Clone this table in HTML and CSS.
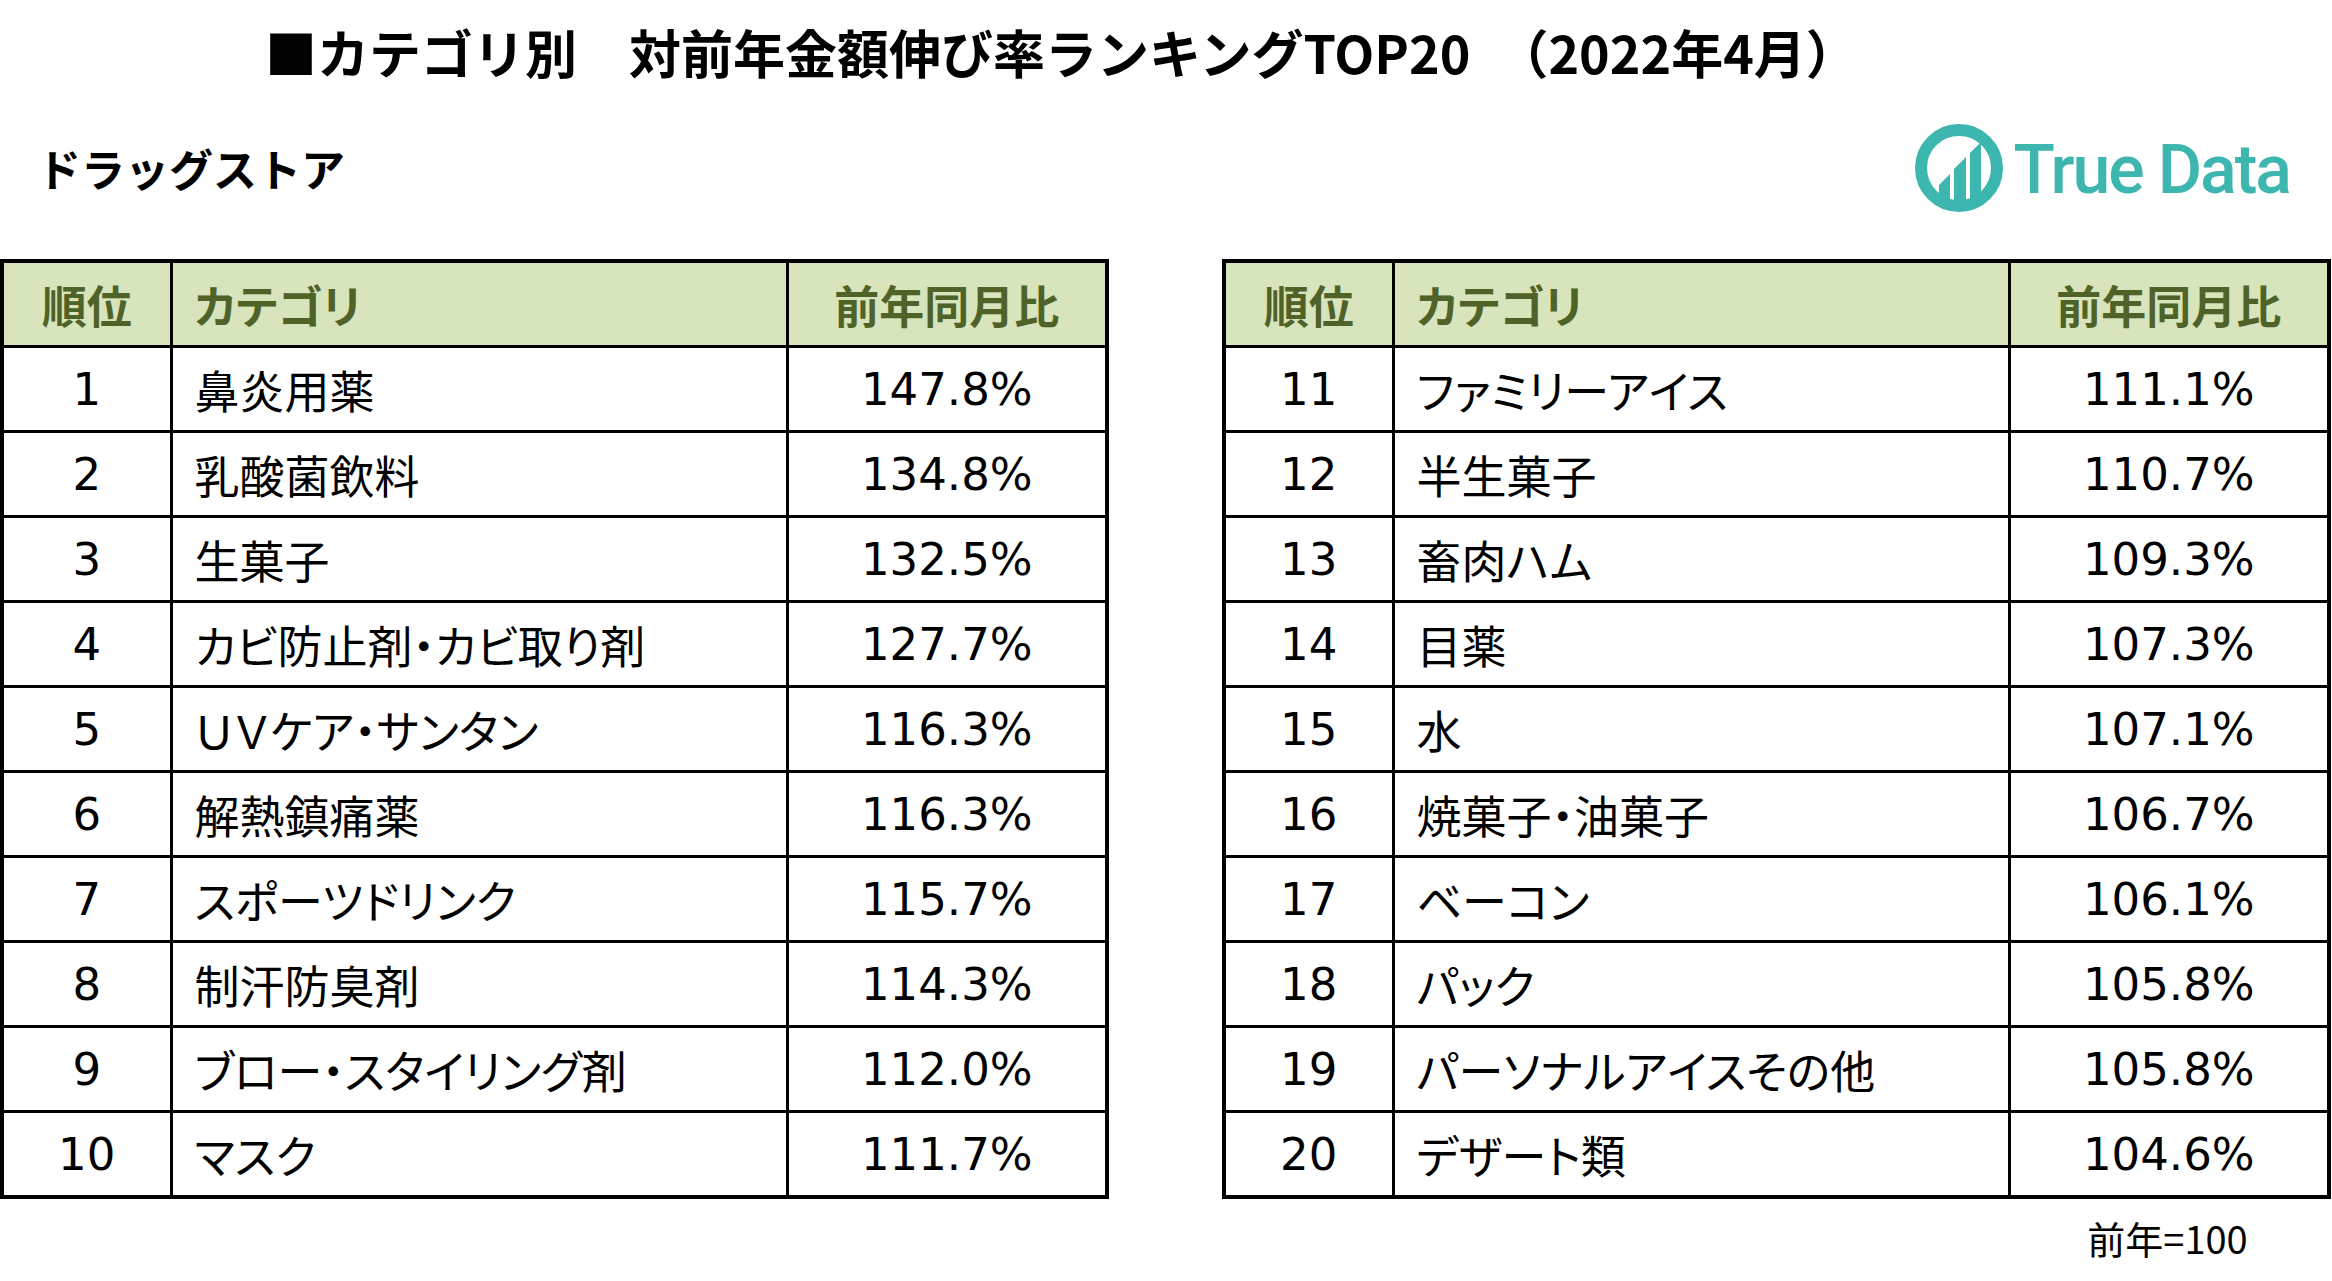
FILE: index.html
```html
<!DOCTYPE html>
<html lang="ja">
<head>
<meta charset="utf-8">
<title>カテゴリ別 対前年金額伸び率ランキングTOP20</title>
<link rel="stylesheet" href="styles.css">
</head>
<body>
<div class="page">
  <h1 class="title">■カテゴリ別　対前年金額伸び率ランキングTOP20　（2022年4月）</h1>
  <div class="subhead">
    <h2 class="channel">ドラッグストア</h2>
    <div class="logo">
      <svg class="logo-mark" width="88" height="88" viewBox="0 0 88 88" aria-hidden="true">
        <defs>
          <clipPath id="inner"><circle cx="44" cy="44" r="39"/></clipPath>
        </defs>
        <circle cx="44" cy="44" r="38" fill="none" stroke="#3DB6B0" stroke-width="12"/>
        <g clip-path="url(#inner)" fill="#3DB6B0">
          <polygon points="24,61 35,50 35,90 24,90"/>
          <polygon points="39,45 51,33 51,90 39,90"/>
          <polygon points="55,29 66,18 66,90 55,90"/>
        </g>
      </svg>
      <span class="logo-text">True Data</span>
    </div>
  </div>
  <div class="tables">
    <table class="rank-table">
      <colgroup><col class="c-rank"><col class="c-cat"><col class="c-pct"></colgroup>
      <thead>
        <tr><th class="rank">順位</th><th class="cat">カテゴリ</th><th class="pct">前年同月比</th></tr>
      </thead>
      <tbody>
        <tr><td class="rank">1</td><td class="cat">鼻炎用薬</td><td class="pct">147.8%</td></tr>
        <tr><td class="rank">2</td><td class="cat">乳酸菌飲料</td><td class="pct">134.8%</td></tr>
        <tr><td class="rank">3</td><td class="cat">生菓子</td><td class="pct">132.5%</td></tr>
        <tr><td class="rank">4</td><td class="cat">カビ防止剤・カビ取り剤</td><td class="pct">127.7%</td></tr>
        <tr><td class="rank">5</td><td class="cat">ＵＶケア・サンタン</td><td class="pct">116.3%</td></tr>
        <tr><td class="rank">6</td><td class="cat">解熱鎮痛薬</td><td class="pct">116.3%</td></tr>
        <tr><td class="rank">7</td><td class="cat">スポーツドリンク</td><td class="pct">115.7%</td></tr>
        <tr><td class="rank">8</td><td class="cat">制汗防臭剤</td><td class="pct">114.3%</td></tr>
        <tr><td class="rank">9</td><td class="cat">ブロー・スタイリング剤</td><td class="pct">112.0%</td></tr>
        <tr><td class="rank">10</td><td class="cat">マスク</td><td class="pct">111.7%</td></tr>
      </tbody>
    </table>
    <table class="rank-table">
      <colgroup><col class="c-rank"><col class="c-cat"><col class="c-pct"></colgroup>
      <thead>
        <tr><th class="rank">順位</th><th class="cat">カテゴリ</th><th class="pct">前年同月比</th></tr>
      </thead>
      <tbody>
        <tr><td class="rank">11</td><td class="cat">ファミリーアイス</td><td class="pct">111.1%</td></tr>
        <tr><td class="rank">12</td><td class="cat">半生菓子</td><td class="pct">110.7%</td></tr>
        <tr><td class="rank">13</td><td class="cat">畜肉ハム</td><td class="pct">109.3%</td></tr>
        <tr><td class="rank">14</td><td class="cat">目薬</td><td class="pct">107.3%</td></tr>
        <tr><td class="rank">15</td><td class="cat">水</td><td class="pct">107.1%</td></tr>
        <tr><td class="rank">16</td><td class="cat">焼菓子・油菓子</td><td class="pct">106.7%</td></tr>
        <tr><td class="rank">17</td><td class="cat">ベーコン</td><td class="pct">106.1%</td></tr>
        <tr><td class="rank">18</td><td class="cat">パック</td><td class="pct">105.8%</td></tr>
        <tr><td class="rank">19</td><td class="cat">パーソナルアイスその他</td><td class="pct">105.8%</td></tr>
        <tr><td class="rank">20</td><td class="cat">デザート類</td><td class="pct">104.6%</td></tr>
      </tbody>
    </table>
  </div>
  <div class="note-row"><p class="note">前年=100</p></div>
</div>
</body>
</html>
```
FILE: styles.css
```css
html, body {
  margin: 0;
  padding: 0;
  background: #ffffff;
}

body {
  font-family: "Noto Sans CJK JP", "Noto Sans", sans-serif;
  color: #000000;
}

.page {
  width: 2332px;
  height: 1281px;
  display: flex;
  flex-direction: column;
  overflow: hidden;
}

.title {
  margin: 0;
  padding: 21px 0 0 265px;
  font-size: 52px;
  line-height: 62px;
  font-weight: 700;
  white-space: nowrap;
}

.subhead {
  box-sizing: border-box;
  height: 176px;
  padding-bottom: 6px;
  display: flex;
  justify-content: space-between;
  align-items: center;
}

.channel {
  margin: 0;
  padding-left: 37px;
  font-size: 44px;
  line-height: 1;
  font-weight: 700;
}

.logo {
  display: flex;
  align-items: center;
  padding-right: 42px;
}

.logo-mark {
  display: block;
}

.logo-text {
  margin-left: 10px;
  padding-top: 4px;
  font-family: Roboto, "Noto Sans", sans-serif;
  font-weight: 500;
  font-size: 68px;
  letter-spacing: -2px;
  line-height: 1;
  color: #3DB6B0;
}

.tables {
  display: flex;
  gap: 113px;
}

.rank-table {
  width: 1105px;
  table-layout: fixed;
  border-collapse: collapse;
  border: 4px solid #000000;
}

.c-rank { width: 169px; }
.c-cat { width: 616px; }
.c-pct { width: 320px; }

.rank-table th,
.rank-table td {
  height: 82px;
  padding: 0;
  border: 3px solid #000000;
  font-size: 45px;
  line-height: 1;
  white-space: nowrap;
}

.rank-table th {
  background: #D7E4BC;
  color: #4F6228;
  font-weight: 700;
}

.rank-table .rank,
.rank-table .pct {
  text-align: center;
}

.rank-table .cat {
  text-align: left;
  padding-left: 22px;
  font-feature-settings: "palt";
}

.rank-table td {
  font-weight: 400;
}

.rank-table td.rank,
.rank-table td.pct {
  font-family: "DejaVu Sans", "Noto Sans", sans-serif;
}

.note-row {
  display: flex;
  justify-content: flex-end;
  padding-right: 4px;
}

.note {
  margin: 16px 0 0 0;
  width: 321px;
  text-align: center;
  font-size: 38px;
  line-height: 1.2;
}
```
